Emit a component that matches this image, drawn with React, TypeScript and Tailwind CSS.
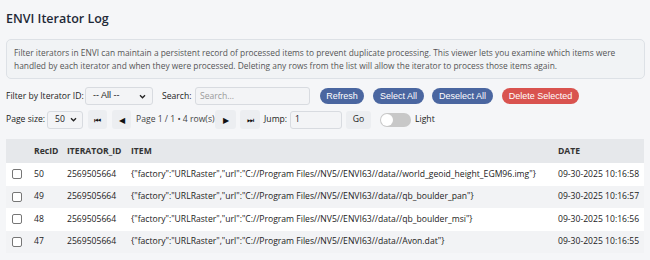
const rows = [
  { id: 50, it: "2569505664", item: '{"factory":"URLRaster","url":"C://Program Files//NV5//ENVI63//data//world_geoid_height_EGM96.img"}', date: "09-30-2025 10:16:58" },
  { id: 49, it: "2569505664", item: '{"factory":"URLRaster","url":"C://Program Files//NV5//ENVI63//data//qb_boulder_pan"}', date: "09-30-2025 10:16:57" },
  { id: 48, it: "2569505664", item: '{"factory":"URLRaster","url":"C://Program Files//NV5//ENVI63//data//qb_boulder_msi"}', date: "09-30-2025 10:16:56" },
  { id: 47, it: "2569505664", item: '{"factory":"URLRaster","url":"C://Program Files//NV5//ENVI63//data//Avon.dat"}', date: "09-30-2025 10:16:55" },
];

function NavButton({ children, className }: { children: React.ReactNode; className: string }) {
  return (
    <button className={`shrink-0 h-[19px] rounded-[3px] bg-[#eceef1] flex items-center justify-center text-[#111] text-[8px] leading-none ${className}`}>
      {children}
    </button>
  );
}

function Caret() {
  return (
    <svg width="7" height="5" viewBox="0 0 8 6">
      <path d="M1 1.5 L4 4.5 L7 1.5" fill="none" stroke="#222" strokeWidth="1.6" />
    </svg>
  );
}

export default function App() {
  return (
    <div className="w-[650px] h-[260px] overflow-hidden bg-[#f5f6f8] px-[6px] font-['Open_Sans',sans-serif] text-[#222]">
      <h1 className="pt-[9px] text-[12.5px] font-semibold text-[#1f2937] leading-[20px]">ENVI Iterator Log</h1>

      <div className="mt-[10px] w-[639px] h-[40px] border border-[#dde1e6] rounded-[5px] bg-[#f1f3f5] px-[7px] py-[6px] text-[8.4px] leading-[13px] text-[#555]">
        Filter iterators in ENVI can maintain a persistent record of processed items to prevent duplicate processing. This viewer lets you examine which items were handled by each iterator and when they were processed. Deleting any rows from the list will allow the iterator to process those items again.
      </div>

      <div className="mt-[8px] flex items-center h-[18px] text-[8.6px]">
        <span className="shrink-0 w-[79px] whitespace-nowrap">Filter by Iterator ID:</span>
        <div className="shrink-0 w-[68px] h-[18px] border border-[#d8dbe0] rounded-[3px] bg-[#f3f4f6] flex items-center justify-between pl-[7px] pr-[6px] font-['Liberation_Sans',sans-serif] text-[9px]">
          <span>-- All --</span>
          <Caret />
        </div>
        <span className="shrink-0 ml-[9px] w-[33px]">Search:</span>
        <div className="shrink-0 w-[115px] h-[18px] border border-[#d8dbe0] rounded-[3px] bg-[#f3f4f6] flex items-center px-[4px] text-[#9a9a9a]">
          Search...
        </div>
        <button className="shrink-0 ml-[10px] w-[44px] h-[16px] rounded-full bg-[#4a66a0] text-white font-['Liberation_Sans',sans-serif] text-[9px] leading-none">Refresh</button>
        <button className="shrink-0 ml-[9px] w-[51px] h-[16px] rounded-full bg-[#4a66a0] text-white font-['Liberation_Sans',sans-serif] text-[9px] leading-none">Select All</button>
        <button className="shrink-0 ml-[8px] w-[61px] h-[16px] rounded-full bg-[#4a66a0] text-white font-['Liberation_Sans',sans-serif] text-[9px] leading-none">Deselect All</button>
        <button className="shrink-0 ml-[9px] w-[77px] h-[16px] rounded-full bg-[#d9534f] text-white font-['Liberation_Sans',sans-serif] text-[9px] leading-none">Delete Selected</button>
      </div>

      <div className="mt-[5px] flex items-center h-[19px] text-[8.6px]">
        <span className="shrink-0 whitespace-nowrap">Page size:</span>
        <div className="shrink-0 ml-[2px] w-[36px] h-[18px] border border-[#d8dbe0] rounded-[3px] bg-[#f3f4f6] flex items-center justify-between pl-[7px] pr-[5px]">
          <span>50</span>
          <Caret />
        </div>
        <NavButton className="ml-[5px] w-[19px]">⏮</NavButton>
        <NavButton className="ml-[5px] w-[19px]">◀</NavButton>
        <span className="shrink-0 ml-[5px] w-[79px] whitespace-nowrap text-[#444]">Page 1 / 1 • 4 row(s)</span>
        <NavButton className="w-[21px]">▶</NavButton>
        <NavButton className="ml-[4px] w-[20px]">⏭</NavButton>
        <span className="shrink-0 ml-[4px] w-[26px]">Jump:</span>
        <div className="shrink-0 w-[52px] h-[18px] border border-[#d8dbe0] rounded-[3px] bg-[#f3f4f6] flex items-center px-[4px]">1</div>
        <button className="shrink-0 ml-[4px] w-[25px] h-[18px] rounded-[3px] bg-[#eceef1]">Go</button>
        <div className="shrink-0 ml-[9px] w-[31px] h-[14px] rounded-full bg-[#c8c8c8] flex items-center px-[1px]">
          <div className="w-[12px] h-[12px] rounded-full bg-white" />
        </div>
        <span className="shrink-0 ml-[4px]">Light</span>
      </div>

      <table className="mt-[10px] w-[638px] table-fixed border-collapse text-[8.6px]">
        <thead>
          <tr className="bg-[#e6e8eb] h-[24px] text-left text-[#333]">
            <th className="w-[28px]" />
            <th className="w-[33px] font-bold">RecID</th>
            <th className="w-[64px] font-bold">ITERATOR_ID</th>
            <th className="w-[427px] font-bold">ITEM</th>
            <th className="w-[86px] font-bold">DATE</th>
          </tr>
        </thead>
        <tbody>
          {rows.map((r, i) => (
            <tr key={r.id} className={i % 2 === 0 ? "bg-white h-[22.5px]" : "bg-[#f2f3f5] h-[22.5px]"}>
              <td className="pl-[6px]">
                <div className="w-[10px] h-[10px] border border-[#767676] rounded-[2px] bg-white" />
              </td>
              <td>{r.id}</td>
              <td>{r.it}</td>
              <td className="whitespace-nowrap">{r.item}</td>
              <td className="whitespace-nowrap">{r.date}</td>
            </tr>
          ))}
        </tbody>
      </table>
    </div>
  );
}
